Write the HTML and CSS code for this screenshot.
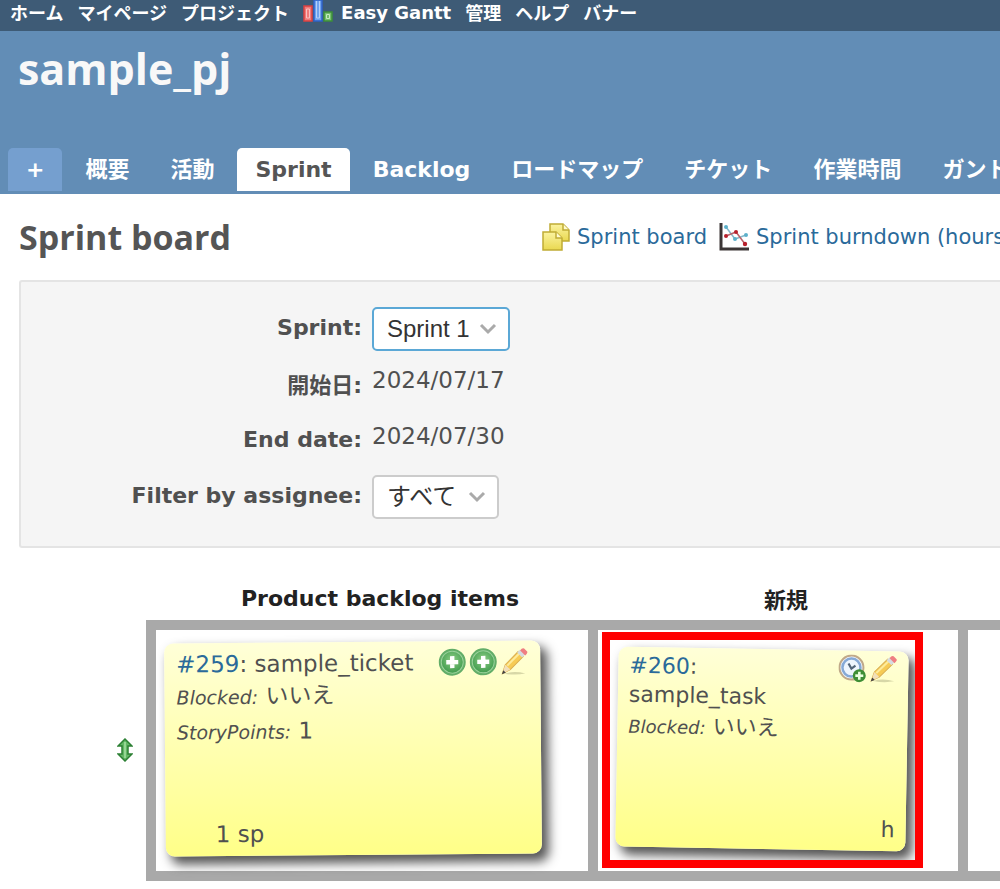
FILE: index.html
```html
<!DOCTYPE html>
<html lang="ja">
<head>
    <meta charset="UTF-8">
    <meta name="viewport" content="width=device-width, initial-scale=1.0">
    <title>Sprint board - sample_pj</title>
    <link rel="stylesheet" href="styles.css">
</head>
<body>
    <!-- Shared icons -->
    <svg class="symbols" aria-hidden="true">
        <defs>
            <radialGradient id="greenFill" cx="0.5" cy="0.4" r="0.6">
                <stop offset="0" stop-color="#8fcf86"/>
                <stop offset="1" stop-color="#3f9a4d"/>
            </radialGradient>
            <linearGradient id="noteFill" x1="0" y1="0" x2="0" y2="1">
                <stop offset="0" stop-color="#fbf3a0"/>
                <stop offset="1" stop-color="#e9d850"/>
            </linearGradient>
        </defs>
        <symbol id="icon-add" viewBox="0 0 28 28">
            <circle cx="14" cy="14" r="13.500" fill="#62ad68"/>
            <circle cx="14" cy="14" r="11" fill="url(#greenFill)" stroke="#9ad19a" stroke-width="1"/>
            <path d="M14 8v12M8 14h12" stroke="#fff" stroke-width="4.400"/>
        </symbol>
        <symbol id="icon-edit" viewBox="0 0 28 28">
            <path d="M4 26q10-3 21 0q-10 2-21 0z" fill="#8b8b60" opacity="0.350"/>
            <path d="M2 26l3-9 13-13 5 5-13 13z" fill="#f6cb55" stroke="#d9ad50" stroke-width="1"/>
            <path d="M7 18l12-12" stroke="#fdeb9b" stroke-width="2"/>
            <path d="M2 26l3-9 5 5z" fill="#f2dfb8"/>
            <path d="M1.500 26.500l1.500-4 2.500 2.500z" fill="#444"/>
            <path d="M17 5l3-3 5 5-3 3z" fill="#d5dbe0"/>
            <path d="M20 3q2-3 4-2l3 3q1 1-2 4z" fill="#ef7e82"/>
        </symbol>
        <symbol id="icon-time" viewBox="0 0 28 28">
            <circle cx="13" cy="13" r="12" fill="#f0f5fb" stroke="#c0a988" stroke-width="2"/>
            <circle cx="13" cy="13" r="9" fill="#eef5fd" stroke="#86a9d6" stroke-width="2.500"/>
            <path d="M10 9l3 5 4-3" fill="none" stroke="#536579" stroke-width="2.200"/>
            <circle cx="21" cy="21" r="6.500" fill="#3e8e35"/>
            <path d="M21 17v8M17 21h8" stroke="#eaffdf" stroke-width="2.600"/>
        </symbol>
        <symbol id="icon-notes" viewBox="0 0 28 28">
            <path d="M8 1h13l6 6v11H8z" fill="url(#noteFill)" stroke="#c0ac35" stroke-width="1.500"/>
            <path d="M21 1v6h6" fill="#fffbd0" stroke="#c0ac35" stroke-width="1.500"/>
            <path d="M1 9h13l6 6v12H1z" fill="url(#noteFill)" stroke="#c0ac35" stroke-width="1.500"/>
            <path d="M14 9v6h6" fill="#fffbd0" stroke="#c0ac35" stroke-width="1.500"/>
        </symbol>
        <symbol id="icon-chart" viewBox="0 0 30 30">
            <path d="M2 1v26h28" fill="none" stroke="#3c3636" stroke-width="3"/>
            <path d="M7 5l9 12 11-4" fill="none" stroke="#86b9cb" stroke-width="1.500"/>
            <path d="M7 14l10-4 9 12" fill="none" stroke="#b8646c" stroke-width="1.500"/>
            <g fill="#5cb0ca"><circle cx="7" cy="5" r="2"/><circle cx="16" cy="17" r="2"/><circle cx="27" cy="13" r="2"/></g>
            <g fill="#b8202c"><circle cx="7" cy="14" r="2"/><circle cx="17" cy="10" r="2"/><circle cx="26" cy="22" r="2.200"/></g>
        </symbol>
    </svg>

    <nav class="top-menu">
        <a href="#">ホーム</a>
        <a href="#">マイページ</a>
        <a href="#">プロジェクト</a>
        <a href="#" class="gantt">
            <svg class="icon-gantt" viewBox="0 0 30 24" aria-hidden="true">
                <path d="M1 6h8v15H1z" fill="#f07a7a" stroke="#d94242" stroke-width="1.500"/>
                <path d="M3.500 9h3v9h-3z" fill="none" stroke="#fbc0c0"/>
                <path d="M11 0h8v21h-8z" fill="#6ea2ee" stroke="#2e62c8" stroke-width="1.500"/>
                <path d="M13.500 1v17h3V1" fill="none" stroke="#b5d0fa"/>
                <path d="M21 12h8v9h-8z" fill="#74bd6c" stroke="#3c8f3a" stroke-width="1.500"/>
                <path d="M23.500 14.500h3v4h-3z" fill="none" stroke="#c4eabf"/>
            </svg>
            Easy Gantt
        </a>
        <a href="#">管理</a>
        <a href="#">ヘルプ</a>
        <a href="#">バナー</a>
    </nav>

    <header class="header">
        <h1>sample_pj</h1>
        <nav class="main-menu">
            <a href="#" class="new-object">+</a>
            <a href="#">概要</a>
            <a href="#">活動</a>
            <a href="#" class="selected">Sprint</a>
            <a href="#">Backlog</a>
            <a href="#">ロードマップ</a>
            <a href="#">チケット</a>
            <a href="#">作業時間</a>
            <a href="#">ガント</a>
        </nav>
    </header>

    <main class="content">
        <div class="title-bar">
            <h2>Sprint board</h2>
            <div class="contextual">
                <a href="#"><svg class="icon-notes" aria-hidden="true"><use href="#icon-notes"/></svg>Sprint board</a>
                <a href="#"><svg class="icon-chart" aria-hidden="true"><use href="#icon-chart"/></svg>Sprint burndown (hours)</a>
            </div>
        </div>

        <form class="box">
            <div class="field">
                <label for="sprint">Sprint:</label>
                <span class="select focused">
                    <select id="sprint"><option>Sprint 1</option></select>
                    <svg viewBox="0 0 18 12" aria-hidden="true"><path d="M2 2l7 7 7-7"/></svg>
                </span>
            </div>
            <div class="field">
                <span class="label">開始日:</span>
                <span class="value">2024/07/17</span>
            </div>
            <div class="field">
                <span class="label">End date:</span>
                <span class="value">2024/07/30</span>
            </div>
            <div class="field">
                <label for="assignee">Filter by assignee:</label>
                <span class="select">
                    <select id="assignee"><option>すべて</option></select>
                    <svg viewBox="0 0 18 12" aria-hidden="true"><path d="M2 2l7 7 7-7"/></svg>
                </span>
            </div>
        </form>

        <table class="board">
            <thead>
                <tr>
                    <td class="sort"></td>
                    <th class="pbi">Product backlog items</th>
                    <th class="status">新規</th>
                    <td></td>
                </tr>
            </thead>
            <tbody>
                <tr>
                    <td class="sort">
                        <svg class="icon-sort" viewBox="0 0 16 24" aria-hidden="true">
                            <path d="M8 1l7 7h-4v8h4l-7 7-7-7h4V8H1z" fill="#62b765" stroke="#2c8034" stroke-width="1.500"/>
                            <path d="M8 4v16" stroke="#a9e0a6" stroke-width="1.500"/>
                        </svg>
                    </td>
                    <td class="lane">
                        <article class="post-it story">
                            <div class="post-it-head">
                                <p><a href="#">#259</a>: sample_ticket</p>
                                <span class="actions">
                                    <svg aria-hidden="true"><use href="#icon-add"/></svg>
                                    <svg aria-hidden="true"><use href="#icon-add"/></svg>
                                    <svg aria-hidden="true"><use href="#icon-edit"/></svg>
                                </span>
                            </div>
                            <p class="attribute"><i>Blocked:</i> いいえ</p>
                            <p class="attribute"><i>StoryPoints:</i> 1</p>
                            <p class="points">1 sp</p>
                        </article>
                    </td>
                    <td class="lane">
                        <div class="highlight">
                            <article class="post-it task">
                                <div class="post-it-head">
                                    <p><a href="#">#260</a>:<br>sample_task</p>
                                    <span class="actions">
                                        <svg aria-hidden="true"><use href="#icon-time"/></svg>
                                        <svg aria-hidden="true"><use href="#icon-edit"/></svg>
                                    </span>
                                </div>
                                <p class="attribute"><i>Blocked:</i> いいえ</p>
                                <p class="hours">h</p>
                            </article>
                        </div>
                    </td>
                    <td class="lane"></td>
                </tr>
            </tbody>
        </table>
    </main>
</body>
</html>
```

FILE: styles.css
```css
body {
    font-family: Verdana, "DejaVu Sans", "Noto Sans CJK JP", sans-serif;
    font-size: 22px;
    margin: 0;
    color: #505050;
    background-color: #fff;
    overflow-x: hidden;
}

h1,
h2,
p {
    margin: 0;
}

a {
    color: #2a6a9a;
    text-decoration: none;
}

.symbols {
    position: absolute;
    width: 0;
    height: 0;
}

/* Top menu */
.top-menu {
    display: flex;
    align-items: center;
    gap: 14px;
    height: 24px;
    padding: 0 10px 7px;
    background-color: #3e5b76;
    font-size: 18px;
    font-weight: bold;
    white-space: nowrap;
}

.top-menu a {
    color: #fff;
}

.gantt {
    display: flex;
    align-items: center;
    gap: 8px;
}

.icon-gantt {
    width: 30px;
    height: 24px;
}

/* Project header */
.header {
    background-color: #628db6;
    overflow: hidden;
}

.header h1 {
    padding: 8px 18px 0;
    font-family: "Trebuchet MS", "Open Sans", sans-serif;
    font-size: 43px;
    line-height: 60px;
    color: #f8f8f8;
}

.main-menu {
    display: flex;
    gap: 5px;
    padding: 49px 0 3px 8px;
    font-weight: bold;
    line-height: 43px;
    white-space: nowrap;
}

.main-menu a {
    height: 43px;
    padding: 0 18px;
    border-radius: 5px 5px 0 0;
    color: #fff;
}

.main-menu .new-object {
    background-color: #759fcf;
}

.main-menu .selected {
    background-color: #fff;
    color: #555;
}

/* Content */
.content {
    padding-left: 19px;
}

.title-bar {
    display: flex;
    align-items: center;
    justify-content: space-between;
    height: 86px;
    overflow: hidden;
}

.title-bar h2 {
    font-family: "Trebuchet MS", "Open Sans", sans-serif;
    font-size: 34px;
    color: #555;
}

.contextual {
    display: flex;
    flex: 0 0 458px;
    gap: 12px;
    min-width: 0;
    font-size: 21px;
    white-space: nowrap;
}

.contextual a {
    display: flex;
    flex-shrink: 0;
    align-items: center;
    gap: 7px;
}

.icon-notes {
    width: 28px;
    height: 28px;
}

.icon-chart {
    width: 30px;
    height: 30px;
}

.box {
    padding: 17px 0 23px;
    border: 2px solid #e4e4e4;
    border-right: none;
    border-radius: 3px 0 0 3px;
    background-color: #f5f5f5;
}

.field {
    display: grid;
    grid-template-columns: 341px 1fr;
    column-gap: 10px;
    align-items: center;
    height: 56px;
}

.field label,
.field .label {
    font-weight: bold;
    text-align: right;
}

.value {
    padding-bottom: 7px;
    font-size: 23px;
}

.select {
    position: relative;
    justify-self: start;
    margin-top: 4px;
}

.select select {
    display: block;
    appearance: none;
    height: 44px;
    padding: 0 38px 2px 13px;
    border: 2px solid #ccc;
    border-radius: 5px;
    background-color: #fff;
    color: #333;
    font-family: Arial, "Liberation Sans", "Noto Sans CJK JP", sans-serif;
    font-size: 24px;
}

.select.focused select {
    border-color: #5ba8d6;
}

.select svg {
    position: absolute;
    top: 16px;
    right: 13px;
    width: 18px;
    height: 12px;
    fill: none;
    stroke: #aaa;
    stroke-width: 3;
    pointer-events: none;
}

/* Board */
.board {
    width: 100%;
    margin-top: 28px;
    border-spacing: 0;
    table-layout: fixed;
}

.board td,
.board th {
    padding: 0;
}

.board th {
    height: 44px;
    padding-left: 26px;
    box-sizing: border-box;
    color: #222;
    vertical-align: middle;
}

.sort {
    width: 127px;
    text-align: right;
}

.board .pbi {
    width: 442px;
}

.board .status {
    width: 370px;
}

.icon-sort {
    width: 16px;
    height: 24px;
    margin: 4px 13px 0 0;
}

.lane {
    height: 241px;
    border: 10px solid #a9a9a9;
    border-right: none;
    vertical-align: top;
}

.highlight {
    box-sizing: border-box;
    width: 321px;
    height: 236px;
    margin: 2px 4px;
    padding: 9px 7px;
    border: 8px solid #f00;
    overflow: hidden; /* keep the note's shadow off the border */
}

.post-it {
    display: flex;
    flex-direction: column;
    box-sizing: border-box;
    border-radius: 9px;
    background-image: linear-gradient(#ffffd8, #ffff88);
    box-shadow: 6px 7px 11px 1px #555;
}

.story {
    width: 376px;
    height: 213px;
    margin: 12px 9px;
    padding: 7px 12px 9px;
    font-size: 23px;
    transform: rotate(-0.5deg);
}

.task {
    width: 290px;
    height: 200px;
    padding: 4px 11px 9px;
    transform: rotate(1deg);
}

.post-it-head {
    display: flex;
    justify-content: space-between;
    line-height: 29px;
}

.actions {
    display: flex;
    gap: 3px;
}

.actions svg {
    width: 28px;
    height: 28px;
}

.attribute {
    line-height: 34px;
}

.attribute i {
    font-size: 18px;
}

.story .attribute i {
    font-size: 19px;
}

.points {
    margin-top: auto;
    padding-left: 38px;
}

.hours {
    margin-top: auto;
    text-align: right;
}
```
